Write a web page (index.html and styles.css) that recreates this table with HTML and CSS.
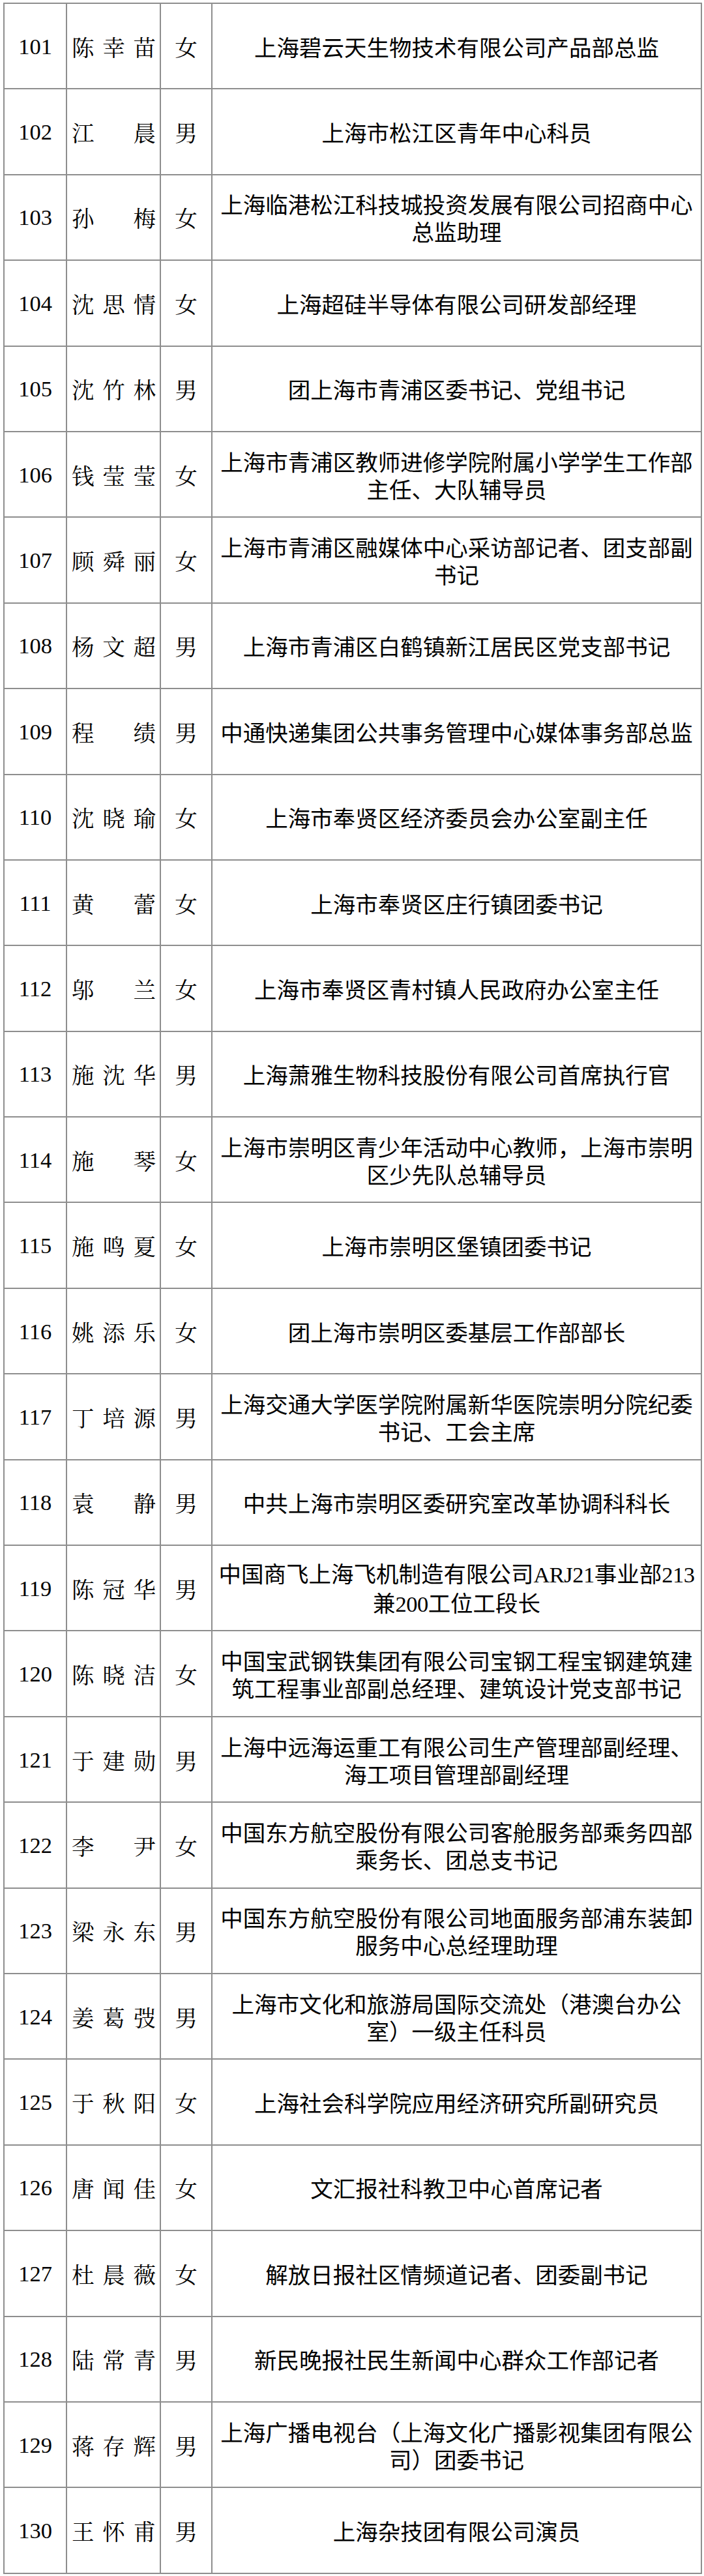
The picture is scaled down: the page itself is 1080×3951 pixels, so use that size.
FILE: index.html
```html
<!DOCTYPE html>
<html lang="zh-CN">
<head>
<meta charset="utf-8">
<title>名单</title>
<link rel="stylesheet" href="styles.css">
</head>
<body>
<table class="roster">
<colgroup><col class="c-no"><col class="c-name"><col class="c-sex"><col class="c-desc"></colgroup>
<tbody>
<tr><td class="no">101</td><td class="name">陈幸苗</td><td class="sex">女</td><td class="desc">上海碧云天生物技术有限公司产品部总监</td></tr>
<tr><td class="no">102</td><td class="name">江晨</td><td class="sex">男</td><td class="desc">上海市松江区青年中心科员</td></tr>
<tr><td class="no">103</td><td class="name">孙梅</td><td class="sex">女</td><td class="desc">上海临港松江科技城投资发展有限公司招商中心总监助理</td></tr>
<tr><td class="no">104</td><td class="name">沈思情</td><td class="sex">女</td><td class="desc">上海超硅半导体有限公司研发部经理</td></tr>
<tr><td class="no">105</td><td class="name">沈竹林</td><td class="sex">男</td><td class="desc">团上海市青浦区委书记、党组书记</td></tr>
<tr><td class="no">106</td><td class="name">钱莹莹</td><td class="sex">女</td><td class="desc">上海市青浦区教师进修学院附属小学学生工作部主任、大队辅导员</td></tr>
<tr><td class="no">107</td><td class="name">顾舜丽</td><td class="sex">女</td><td class="desc">上海市青浦区融媒体中心采访部记者、团支部副书记</td></tr>
<tr><td class="no">108</td><td class="name">杨文超</td><td class="sex">男</td><td class="desc">上海市青浦区白鹤镇新江居民区党支部书记</td></tr>
<tr><td class="no">109</td><td class="name">程绩</td><td class="sex">男</td><td class="desc">中通快递集团公共事务管理中心媒体事务部总监</td></tr>
<tr><td class="no">110</td><td class="name">沈晓瑜</td><td class="sex">女</td><td class="desc">上海市奉贤区经济委员会办公室副主任</td></tr>
<tr><td class="no">111</td><td class="name">黄蕾</td><td class="sex">女</td><td class="desc">上海市奉贤区庄行镇团委书记</td></tr>
<tr><td class="no">112</td><td class="name">邬兰</td><td class="sex">女</td><td class="desc">上海市奉贤区青村镇人民政府办公室主任</td></tr>
<tr><td class="no">113</td><td class="name">施沈华</td><td class="sex">男</td><td class="desc">上海萧雅生物科技股份有限公司首席执行官</td></tr>
<tr><td class="no">114</td><td class="name">施琴</td><td class="sex">女</td><td class="desc">上海市崇明区青少年活动中心教师，上海市崇明区少先队总辅导员</td></tr>
<tr><td class="no">115</td><td class="name">施鸣夏</td><td class="sex">女</td><td class="desc">上海市崇明区堡镇团委书记</td></tr>
<tr><td class="no">116</td><td class="name">姚添乐</td><td class="sex">女</td><td class="desc">团上海市崇明区委基层工作部部长</td></tr>
<tr><td class="no">117</td><td class="name">丁培源</td><td class="sex">男</td><td class="desc">上海交通大学医学院附属新华医院崇明分院纪委书记、工会主席</td></tr>
<tr><td class="no">118</td><td class="name">袁静</td><td class="sex">男</td><td class="desc">中共上海市崇明区委研究室改革协调科科长</td></tr>
<tr><td class="no">119</td><td class="name">陈冠华</td><td class="sex">男</td><td class="desc"><span class="line">中国商飞上海飞机制造有限公司<span class="lat">ARJ21</span>事业部<span class="lat">213</span></span><br>兼<span class="lat">200</span>工位工段长</td></tr>
<tr><td class="no">120</td><td class="name">陈晓洁</td><td class="sex">女</td><td class="desc">中国宝武钢铁集团有限公司宝钢工程宝钢建筑建筑工程事业部副总经理、建筑设计党支部书记</td></tr>
<tr><td class="no">121</td><td class="name">于建勋</td><td class="sex">男</td><td class="desc">上海中远海运重工有限公司生产管理部副经理、海工项目管理部副经理</td></tr>
<tr><td class="no">122</td><td class="name">李尹</td><td class="sex">女</td><td class="desc">中国东方航空股份有限公司客舱服务部乘务四部乘务长、团总支书记</td></tr>
<tr><td class="no">123</td><td class="name">梁永东</td><td class="sex">男</td><td class="desc">中国东方航空股份有限公司地面服务部浦东装卸服务中心总经理助理</td></tr>
<tr><td class="no">124</td><td class="name">姜葛弢</td><td class="sex">男</td><td class="desc">上海市文化和旅游局国际交流处（港澳台办公室）一级主任科员</td></tr>
<tr><td class="no">125</td><td class="name">于秋阳</td><td class="sex">女</td><td class="desc">上海社会科学院应用经济研究所副研究员</td></tr>
<tr><td class="no">126</td><td class="name">唐闻佳</td><td class="sex">女</td><td class="desc">文汇报社科教卫中心首席记者</td></tr>
<tr><td class="no">127</td><td class="name">杜晨薇</td><td class="sex">女</td><td class="desc">解放日报社区情频道记者、团委副书记</td></tr>
<tr><td class="no">128</td><td class="name">陆常青</td><td class="sex">男</td><td class="desc">新民晚报社民生新闻中心群众工作部记者</td></tr>
<tr><td class="no">129</td><td class="name">蒋存辉</td><td class="sex">男</td><td class="desc">上海广播电视台（上海文化广播影视集团有限公司）团委书记</td></tr>
<tr><td class="no">130</td><td class="name">王怀甫</td><td class="sex">男</td><td class="desc">上海杂技团有限公司演员</td></tr>
</tbody>
</table>
</body>
</html>
```
FILE: styles.css
```css
html, body {
  margin: 0;
  padding: 0;
  background: #ffffff;
}

body {
  padding: 4px 5px;
  font-family: "Noto Sans CJK SC", sans-serif;
  color: #000000;
}

.roster {
  width: 1070px;
  border-collapse: collapse;
  table-layout: fixed;
}

.c-no { width: 96px; }
.c-name { width: 144px; }
.c-sex { width: 79px; }
.c-desc { width: 751px; }

.roster td {
  height: 129.4px;
  border: 2px solid #8e8e8e;
  vertical-align: middle;
  padding: 0;
  font-size: 34.5px;
  line-height: 42px;
}

.roster .no {
  text-align: center;
  font-family: "Liberation Serif", "Noto Serif CJK SC", serif;
}

.roster .name {
  padding: 0 6px 0 7px;
  text-align: justify;
  text-align-last: justify;
  text-justify: inter-character;
  font-family: "Noto Serif CJK SC", "Noto Sans CJK SC", serif;
}

.roster .sex {
  text-align: center;
  font-family: "Noto Serif CJK SC", "Noto Sans CJK SC", serif;
}

.roster .desc {
  padding: 0 4px;
  text-align: center;
  font-family: "Noto Sans CJK SC", sans-serif;
}

.line {
  white-space: nowrap;
}

.lat {
  font-family: "Liberation Serif", serif;
  letter-spacing: -0.5px;
}
```
